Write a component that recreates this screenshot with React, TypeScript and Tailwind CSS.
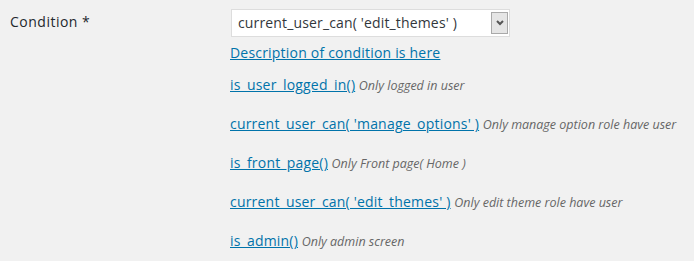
import React from "react";

const rows: { fn: string; desc: string }[] = [
  { fn: "is_user_logged_in()", desc: "Only logged in user" },
  { fn: "current_user_can( 'manage_options' )", desc: "Only manage option role have user" },
  { fn: "is_front_page()", desc: "Only Front page( Home )" },
  { fn: "current_user_can( 'edit_themes' )", desc: "Only edit theme role have user" },
  { fn: "is_admin()", desc: "Only admin screen" },
];

export default function App() {
  return (
    <div className="w-[694px] h-[261px] bg-[#f1f1f1] flex font-['Open_Sans',sans-serif] overflow-hidden">
      <div className="w-[220px] shrink-0 pl-[10px] pt-[10px] text-[14px] leading-[24px] tracking-[0.5px] text-[#23282d]">
        Condition *
      </div>
      <div className="flex flex-col pl-[10px]">
        <div className="mt-[9px] ml-[1px] w-[279px] h-[28px] bg-white border border-[#dddddd] flex items-center justify-between pl-[6px] pr-[1px]">
          <span className="text-[14px] leading-[24px] tracking-[0.15px] text-[#32373c]">current_user_can( 'edit_themes' )</span>
          <div className="w-[17px] h-[22px] bg-[#e5e5e5] border border-[#a9a9a9] flex items-center justify-center">
            <svg width="8" height="6" viewBox="0 0 8 6">
              <path d="M1 1 L4 4 L7 1" stroke="#555" strokeWidth="2" fill="none" />
            </svg>
          </div>
        </div>
        <a href="#" className="mt-[4px] text-[14px] leading-[24px] tracking-[0.2px] text-[#0073aa] underline w-fit">
          Description of condition is here
        </a>
        <div className="mt-[8px] flex flex-col gap-[14px]">
          {rows.map((r) => (
            <div key={r.fn} className="text-[14px] leading-[24px] whitespace-nowrap">
              <a href="#" className="text-[#0073aa] underline tracking-[0.2px]">
                {r.fn}
              </a>{" "}
              <span className="italic text-[12.5px] text-[#666666]">{r.desc}</span>
            </div>
          ))}
        </div>
      </div>
    </div>
  );
}
